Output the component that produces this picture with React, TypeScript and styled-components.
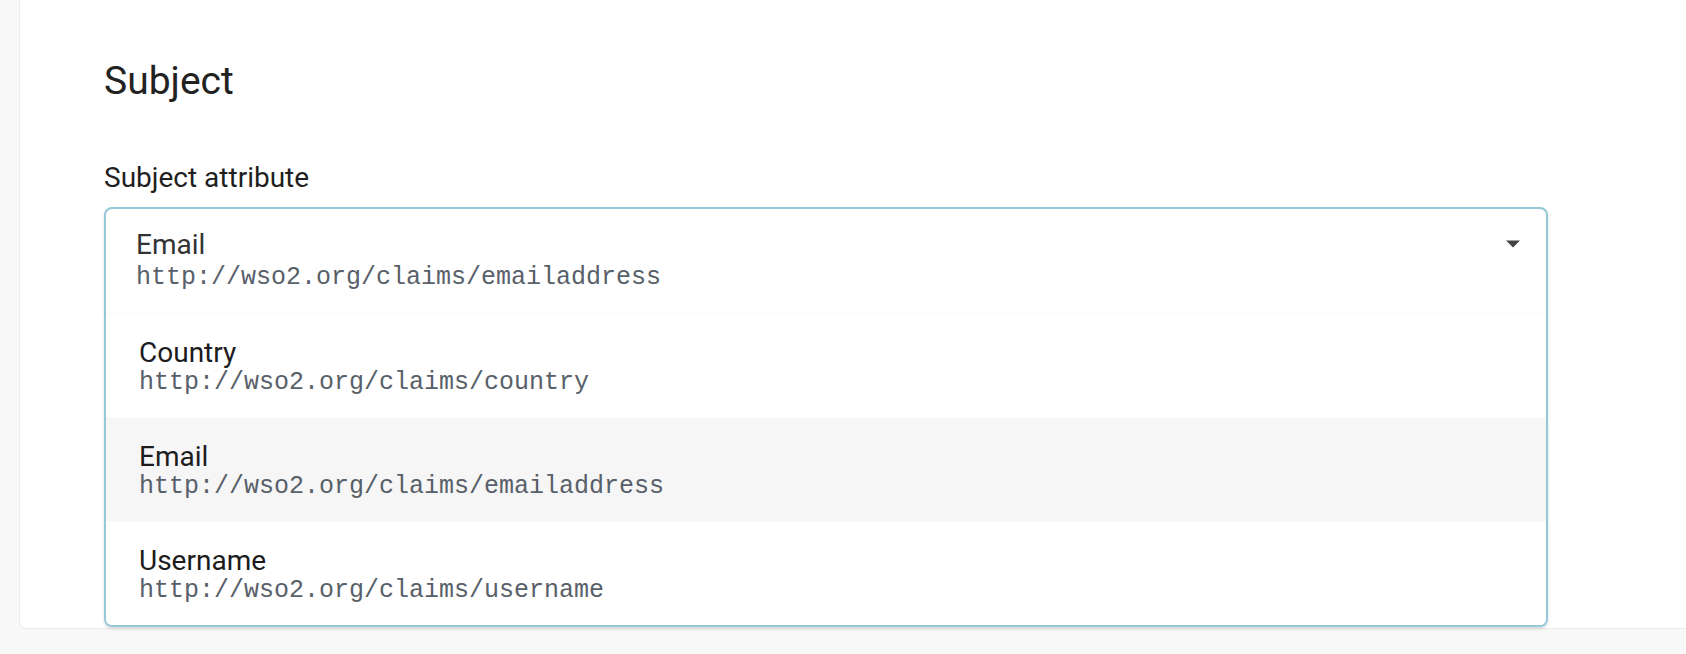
import { createGlobalStyle } from "styled-components";
import styled from "styled-components";

const GlobalStyle = createGlobalStyle`
  html, body {
    margin: 0;
    padding: 0;
    background: #f8f8f8;
    overflow: hidden;
  }
  body {
    font-family: Roboto, "Liberation Sans", Arial, sans-serif;
    color: #212121;
  }
`;

const Page = styled.div`
  display: flex;
  height: 654px;
`;

const Card = styled.section`
  box-sizing: border-box;
  flex: 1;
  height: 629px;
  margin-left: 19px;
  margin-right: -20px;
  padding: 58px 0 0 84px;
  background: #ffffff;
  border-left: 1px solid #ebebeb;
  border-bottom: 1px solid #ebebeb;
  border-bottom-left-radius: 8px;
`;

const Heading = styled.h2`
  margin: 0;
  font-size: 39px;
  line-height: 46px;
  font-weight: 400;
  color: #222222;
`;

const FieldLabel = styled.label`
  display: block;
  margin-top: 57px;
  font-size: 28px;
  line-height: 34px;
  font-weight: 400;
  color: #1f1f1f;
`;

const Dropdown = styled.div`
  position: relative;
  width: 1444px;
  margin-top: 12px;
  box-sizing: border-box;
  border: 2px solid #96c8da;
  border-bottom: none;
  border-radius: 8px 8px 0 0;
  background: #ffffff;
  box-shadow: 0 2px 3px 0 rgba(34, 36, 38, 0.15);
`;

const Selected = styled.div`
  display: flex;
  justify-content: space-between;
  align-items: flex-start;
  height: 104px;
  box-sizing: border-box;
  padding: 19px 26px 0 30px;
`;

const Caret = styled.svg`
  margin-top: 12px;
  flex: none;
`;

const Menu = styled.ul`
  position: absolute;
  top: 100%;
  left: -2px;
  right: -2px;
  margin: 0;
  padding: 0;
  list-style: none;
  background: #ffffff;
  border: 2px solid #96c8da;
  border-top: none;
  border-radius: 0 0 8px 8px;
  box-shadow: 0 2px 3px 0 rgba(34, 36, 38, 0.15);
  overflow: hidden;
`;

const Option = styled.li<{ $active?: boolean }>`
  height: 104px;
  box-sizing: border-box;
  padding: 22px 0 0 33px;
  border-top: 1px solid #fafafa;
  background: ${(p) => (p.$active ? "#f6f6f6" : "#ffffff")};
  cursor: pointer;
`;

const Title = styled.div<{ $muted?: boolean }>`
  font-size: 28px;
  line-height: 34px;
  color: ${(p) => (p.$muted ? "#333333" : "#1c1c1c")};
`;

const Uri = styled.div<{ $shift?: number }>`
  margin-top: ${(p) => p.$shift ?? 0}px;
  font-family: "Liberation Mono", "Courier New", monospace;
  font-size: 25px;
  line-height: 26px;
  color: #58606a;
`;

const claims = [
  { name: "Country", uri: "http://wso2.org/claims/country" },
  { name: "Email", uri: "http://wso2.org/claims/emailaddress" },
  { name: "Username", uri: "http://wso2.org/claims/username" },
];

export default function App() {
  const selected = claims[1];
  return (
    <>
      <GlobalStyle />
      <Page>
        <Card>
          <Heading>Subject</Heading>
          <FieldLabel>Subject attribute</FieldLabel>
          <Dropdown>
            <Selected>
              <div>
                <Title $muted>{selected.name}</Title>
                <Uri $shift={3}>{selected.uri}</Uri>
              </div>
              <Caret width="14" height="8" viewBox="0 0 14 8">
                <path d="M0 0.5 L14 0.5 L7 7.5 Z" fill="#444444" />
              </Caret>
            </Selected>
            <Menu>
              {claims.map((c) => (
                <Option key={c.uri} $active={c.uri === selected.uri}>
                  <Title>{c.name}</Title>
                  <Uri>{c.uri}</Uri>
                </Option>
              ))}
            </Menu>
          </Dropdown>
        </Card>
      </Page>
    </>
  );
}
